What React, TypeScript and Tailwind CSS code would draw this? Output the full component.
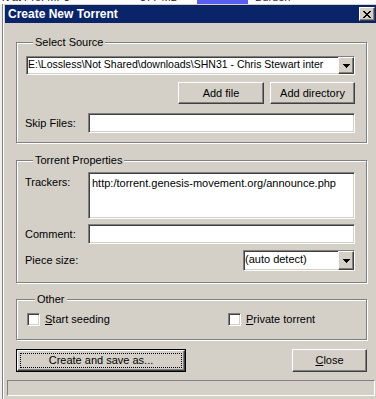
const raised =
  "border border-t-white border-l-white border-r-[#404040] border-b-[#404040] shadow-[inset_-1px_-1px_0_#808080] bg-[#d4d0c8]";
const sunken =
  "border border-t-[#808080] border-l-[#808080] border-r-white border-b-white shadow-[inset_1px_1px_0_#404040,inset_-1px_-1px_0_#d4d0c8] bg-white";
const group =
  "min-w-0 border border-[#808080] shadow-[inset_1px_1px_0_#fff,1px_1px_0_#fff] w-[351px] ml-[11px]";

const DropArrow = () => (
  <div className={`${raised} w-[16px] h-full flex items-center justify-center shrink-0`}>
    <svg width="7" height="4" viewBox="0 0 7 4">
      <path d="M0 0h7v1H0zM1 1h5v1H1zM2 2h3v1H2zM3 3h1v1H3z" fill="#000" />
    </svg>
  </div>
);

const Legend = ({ children }: { children: string }) => (
  <legend className="ml-[8px] px-[2px] leading-[13px] bg-[#d4d0c8]">{children}</legend>
);

const Checkbox = ({ label }: { label: React.ReactNode }) => (
  <label className="flex items-center gap-[5px] leading-[13px]">
    <span className={`${sunken} w-[13px] h-[13px] block`} />
    <span>{label}</span>
  </label>
);

const App = () => {
  return (
    <div
      className="w-[376px] h-[399px] overflow-hidden bg-[#d4d0c8] text-[11px] text-black"
      style={{ fontFamily: '"Liberation Sans", Arial, sans-serif' }}
    >
      {/* parent window peeking out above */}
      <div className="h-[4px] bg-white overflow-hidden flex text-[11px] leading-[11px] text-[#222]">
        <span className="-mt-[8px] ml-[2px] w-[138px] whitespace-nowrap">rt at Pro. MP3</span>
        <span className="-mt-[8px] w-[57px] whitespace-nowrap">877 MB</span>
        <span className="w-[51px] h-[4px] bg-[#5a5ef0]" />
        <span className="-mt-[8px] ml-[7px] whitespace-nowrap">Burden</span>
      </div>

      <div className="flex h-[395px]">
        <div className="w-[3px] h-full bg-[#eeeeee] border-r border-[#808080]" />
        <div className="flex-1 h-full border-l border-l-white border-t border-t-[#d4d0c8] pl-px">
          {/* title bar */}
          <div className="h-[18px] bg-[#0a246a] flex items-start justify-between pr-px">
            <span className="text-white font-bold text-[12px] leading-[18px] pl-[3px]">
              Create New Torrent
            </span>
            <div className={`${raised} mt-[2px] w-[16px] h-[14px] flex items-center justify-center`}>
              <svg width="8" height="7" viewBox="0 0 8 7">
                <path
                  d="M0 0h2v1H0zM6 0h2v1H6zM1 1h2v1H1zM5 1h2v1H5zM2 2h4v1H2zM3 3h2v1H3zM2 4h4v1H2zM1 5h2v1H1zM5 5h2v1H5zM0 6h2v1H0zM6 6h2v1H6z"
                  fill="#000"
                />
              </svg>
            </div>
          </div>

          {/* body */}
          <div className="w-[371px] flex flex-col">
            <fieldset className={`${group} mt-[13px] pl-[8px] pr-[11px] pb-[9px]`}>
              <Legend>Select Source</Legend>
              <div className={`${sunken} mt-[7px] ml-px h-[19px] flex items-stretch pl-[1px] min-w-0`}>
                <span className="flex-1 min-w-0 overflow-hidden whitespace-nowrap leading-[15px] text-[10.5px]">
                  E:\Lossless\Not Shared\downloads\SHN31 - Chris Stewart inter
                </span>
                <DropArrow />
              </div>
              <div className="mt-[7px] flex justify-end gap-[6px]">
                <button className={`${raised} w-[86px] h-[22px] leading-[13px]`}>Add file</button>
                <button className={`${raised} w-[85px] h-[22px] leading-[13px]`}>Add directory</button>
              </div>
              <div className="mt-[9px] flex items-center">
                <span className="w-[63px] leading-[13px]">Skip Files:</span>
                <div className={`${sunken} flex-1 h-[20px]`} />
              </div>
            </fieldset>

            <fieldset className={`${group} mt-[11px] pl-[8px] pr-[11px] pb-[11px]`}>
              <Legend>Torrent Properties</Legend>
              <div className="mt-[5px] flex items-start">
                <span className="w-[63px] leading-[13px] pt-[4px]">Trackers:</span>
                <div className={`${sunken} flex-1 min-w-0 h-[47px] pl-[3px] pt-[4px] leading-[13px] whitespace-nowrap overflow-hidden`}>
                  http:/torrent.genesis-movement.org/announce.php
                </div>
              </div>
              <div className="mt-[5px] flex items-center">
                <span className="w-[63px] leading-[13px]">Comment:</span>
                <div className={`${sunken} flex-1 h-[20px]`} />
              </div>
              <div className="mt-[6px] flex items-center justify-between">
                <span className="leading-[13px]">Piece size:</span>
                <div className={`${sunken} w-[112px] h-[21px] flex items-stretch pl-[1px]`}>
                  <span className="flex-1 leading-[17px]">(auto detect)</span>
                  <DropArrow />
                </div>
              </div>
            </fieldset>

            <fieldset className={`${group} mt-[10px] pl-[10px] pb-[13px]`}>
              <Legend>Other</Legend>
              <div className="mt-[7px] flex">
                <div className="w-[201px]">
                  <Checkbox
                    label={
                      <>
                        <u className="underline-offset-1">S</u>tart seeding
                      </>
                    }
                  />
                </div>
                <Checkbox
                  label={
                    <>
                      <u className="underline-offset-1">P</u>rivate torrent
                    </>
                  }
                />
              </div>
            </fieldset>

            <div className="mt-[9px] ml-[11px] w-[351px] flex justify-between">
              <button className="w-[170px] h-[23px] border border-black bg-black p-0">
                <div className={`${raised} w-full h-full p-[2px]`}>
                  <div className="w-full h-full border border-dotted border-black flex items-center justify-center leading-[13px]">
                    Create and save as...
                  </div>
                </div>
              </button>
              <button className={`${raised} w-[75px] h-[23px] leading-[13px]`}>
                <u className="underline-offset-1">C</u>lose
              </button>
            </div>

            <div className="mt-[8px] ml-[2px] w-[368px] h-[16px] border border-t-[#808080] border-l-[#808080] border-r-white border-b-white" />
          </div>
        </div>
      </div>
    </div>
  );
};

export default App;
